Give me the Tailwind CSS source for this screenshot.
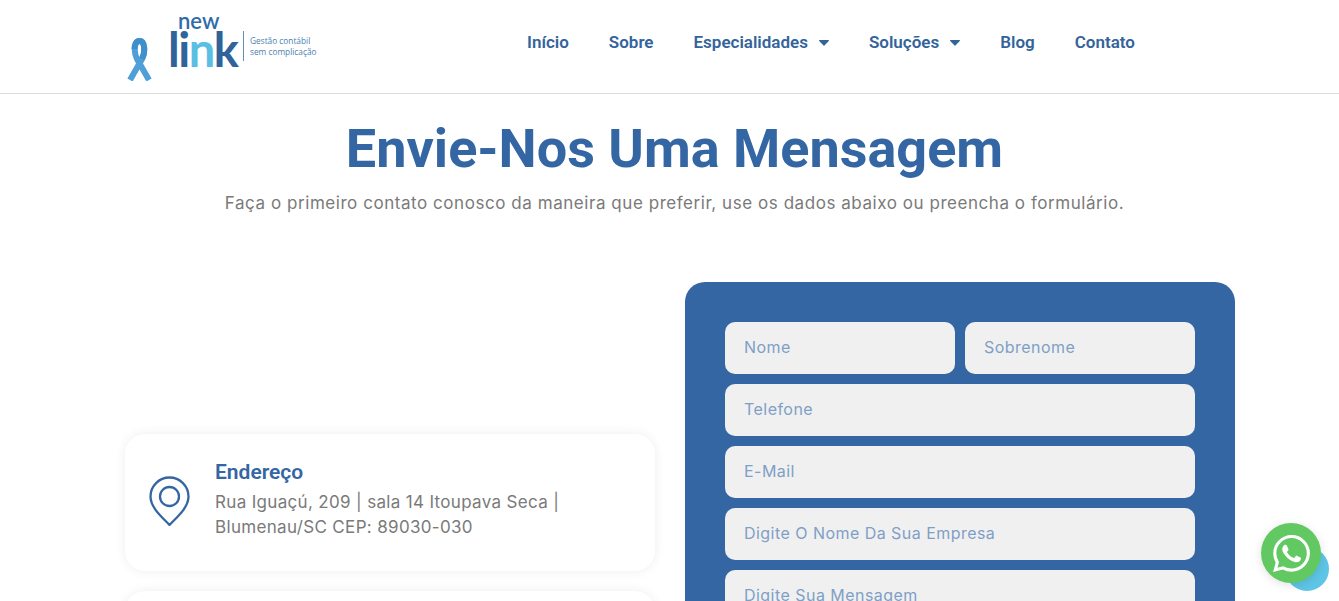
<!DOCTYPE html>
<html lang="pt-BR">
<head>
    <meta charset="UTF-8">
    <meta name="viewport" content="width=device-width, initial-scale=1.0">
    <title>Contato - New Link</title>
    <script src="https://cdn.jsdelivr.net/npm/@tailwindcss/browser@4"></script>
</head>
<body class="relative h-[601px] overflow-hidden bg-white font-['Inter',sans-serif]">

    <!-- Header -->
    <header class="h-[94px] border-b border-[#dedede]">
        <div class="ml-[125px] flex h-full w-[1110px] items-start">
            <a href="#" class="flex h-full w-[402px] shrink-0 items-start pl-[2px]">
                <svg class="mt-[38px] h-[43px] w-[25px] shrink-0" viewBox="0 0 25 43" fill="none">
                    <path d="M3 42 L15 21 C18.500 14 18 3 12.500 3 C7 3 6.500 14 10 21 L22 42" stroke="#4f9fd8" stroke-width="6"/>
                    <path d="M15 21 C18.500 14 18 3 12.500 3 C9 3 7.500 7 7.500 11" stroke="#3f8fcb" stroke-width="6"/>
                </svg>
                <div class="ml-[16px] mt-[14px] flex h-[56px] w-[72px] shrink-0 flex-col">
                    <span class="pl-[10px] text-[22px] leading-[14px] font-semibold text-[#2f6ca8] font-['Lato',sans-serif]">new</span>
                    <span class="text-[47px] leading-[42px] font-bold tracking-[-1.5px] text-[#2f6399] font-['Lato',sans-serif]">li<span class="text-[#5bbfe3]">n</span>k</span>
                </div>
                <div class="ml-[3px] mt-[31px] h-[30px] w-px shrink-0 bg-[#5f8db8]"></div>
                <p class="ml-[6px] mt-[35px] whitespace-nowrap text-[8.300px] leading-[11px] text-[#4a80b0] font-['Open_Sans',sans-serif]">Gestão contábil<br>sem complicação</p>
            </a>
            <nav class="flex h-[85px] items-center gap-[40px] text-[17px] font-semibold text-[#33639b] font-['Roboto',sans-serif]">
                <a href="#">Início</a>
                <a href="#">Sobre</a>
                <a href="#" class="flex items-center gap-[11px]">Especialidades
                    <svg class="h-[6px] w-[10px]" viewBox="0 0 10 6" fill="currentColor"><path d="M.6 0h8.800c.5 0 .8.600.4 1L5.400 5.600a.6.6 0 0 1-.8 0L.2 1C-.2.600.1 0 .6 0z"/></svg>
                </a>
                <a href="#" class="flex items-center gap-[11px]">Soluções
                    <svg class="h-[6px] w-[10px]" viewBox="0 0 10 6" fill="currentColor"><path d="M.6 0h8.800c.5 0 .8.600.4 1L5.400 5.600a.6.6 0 0 1-.8 0L.2 1C-.2.600.1 0 .6 0z"/></svg>
                </a>
                <a href="#">Blog</a>
                <a href="#">Contato</a>
            </nav>
        </div>
    </header>

    <!-- Title -->
    <section class="w-[1349px] pt-[24px] text-center">
        <h1 class="text-[54px] leading-[62px] font-bold text-[#3366a3] font-['Roboto',sans-serif]">Envie-Nos Uma Mensagem</h1>
        <p class="mt-[10px] text-[17px] leading-[26px] tracking-[0.55px] text-[#7a7a7a]">Faça o primeiro contato conosco da maneira que preferir, use os dados abaixo ou preencha o formulário.</p>
    </section>

    <!-- Contact + form -->
    <section class="ml-[125px] mt-[66px] grid w-[1110px] grid-cols-[530px_550px] gap-[30px]">
        <div class="flex flex-col gap-[20px] pt-[152px]">
            <div class="flex h-[137px] items-center rounded-[20px] bg-white pl-[24px] shadow-[0_0_12px_rgba(0,0,0,0.07)]">
                <svg class="mb-[3px] h-[50px] w-[41px] shrink-0" viewBox="0 0 41 50" fill="none" stroke="#3366a3" stroke-width="2.300">
                    <path d="M20.500 49 C14 42 1.500 32 1.500 20.500 A19 19 0 0 1 39.500 20.500 C39.500 32 27 42 20.500 49z" stroke-linejoin="round"/>
                    <circle cx="20.500" cy="20.500" r="9.500"/>
                </svg>
                <div class="ml-[25px] pb-[5px]">
                    <h3 class="text-[21px] leading-[24px] font-semibold text-[#3366a3] font-['Roboto',sans-serif]">Endereço</h3>
                    <p class="mt-[6px] text-[17px] leading-[25px] tracking-[0.33px] text-[#7a7a7a]">Rua Iguaçú, 209 | sala 14 Itoupava Seca |<br>Blumenau/SC CEP: 89030-030</p>
                </div>
            </div>
            <div class="h-[137px] rounded-[20px] bg-white shadow-[0_0_12px_rgba(0,0,0,0.07)]"></div>
        </div>

        <form class="h-[500px] rounded-[20px] bg-[#3366a3] p-[40px]">
            <div class="grid grid-cols-2 gap-[10px] text-[16px] tracking-[0.46px]">
                <input type="text" placeholder="Nome" class="h-[52px] rounded-[10px] bg-[#f0f0f0] px-[19px] pb-[2px] placeholder:text-[#7f9fc6]">
                <input type="text" placeholder="Sobrenome" class="h-[52px] rounded-[10px] bg-[#f0f0f0] px-[19px] pb-[2px] placeholder:text-[#7f9fc6]">
                <input type="text" placeholder="Telefone" class="col-span-2 h-[52px] rounded-[10px] bg-[#f0f0f0] px-[19px] pb-[2px] placeholder:text-[#7f9fc6]">
                <input type="text" placeholder="E-Mail" class="col-span-2 h-[52px] rounded-[10px] bg-[#f0f0f0] px-[19px] pb-[2px] placeholder:text-[#7f9fc6]">
                <input type="text" placeholder="Digite O Nome Da Sua Empresa" class="col-span-2 h-[52px] rounded-[10px] bg-[#f0f0f0] px-[19px] pb-[2px] placeholder:text-[#7f9fc6]">
                <input type="text" placeholder="Digite Sua Mensagem" class="col-span-2 h-[52px] rounded-[10px] bg-[#f0f0f0] px-[19px] pb-[2px] placeholder:text-[#7f9fc6]">
            </div>
        </form>
    </section>

    <!-- WhatsApp floating button -->
    <div class="absolute left-[1285px] top-[547px] h-[44px] w-[44px] rounded-full bg-[#5ec5e6]"></div>
    <a href="#" class="absolute left-[1261px] top-[523px] flex h-[60px] w-[60px] items-center justify-center rounded-full bg-[#62c962] shadow-[0_2px_10px_rgba(0,0,0,0.12)]">
        <svg class="h-[37px] w-[37px]" viewBox="0 0 24 24" fill="#fff"><path d="M17.472 14.382c-.297-.149-1.758-.867-2.030-.967-.273-.099-.471-.148-.670.150-.197.297-.767.966-.940 1.164-.173.199-.347.223-.644.075-.297-.150-1.255-.463-2.390-1.475-.883-.788-1.480-1.761-1.653-2.059-.173-.297-.018-.458.130-.606.134-.133.298-.347.446-.520.149-.174.198-.298.298-.497.099-.198.050-.371-.025-.520-.075-.149-.669-1.612-.916-2.207-.242-.579-.487-.500-.669-.510-.173-.008-.371-.010-.570-.010-.198 0-.520.074-.792.372-.272.297-1.040 1.016-1.040 2.479 0 1.462 1.065 2.875 1.213 3.074.149.198 2.096 3.200 5.077 4.487.709.306 1.262.489 1.694.625.712.227 1.360.195 1.871.118.571-.085 1.758-.719 2.006-1.413.248-.694.248-1.289.173-1.413-.074-.124-.272-.198-.570-.347m-5.421 7.403h-.004a9.870 9.870 0 01-5.031-1.378l-.361-.214-3.741.982.998-3.648-.235-.374a9.860 9.860 0 01-1.510-5.260c.001-5.450 4.436-9.884 9.888-9.884 2.640 0 5.122 1.030 6.988 2.898a9.825 9.825 0 012.893 6.994c-.003 5.450-4.437 9.884-9.885 9.884m8.413-18.297A11.815 11.815 0 0012.050 0C5.495 0 .160 5.335.157 11.892c0 2.096.547 4.142 1.588 5.945L.057 24l6.305-1.654a11.882 11.882 0 005.683 1.448h.005c6.554 0 11.890-5.335 11.893-11.893a11.821 11.821 0 00-3.480-8.413z"/></svg>
    </a>
</body>
</html>
